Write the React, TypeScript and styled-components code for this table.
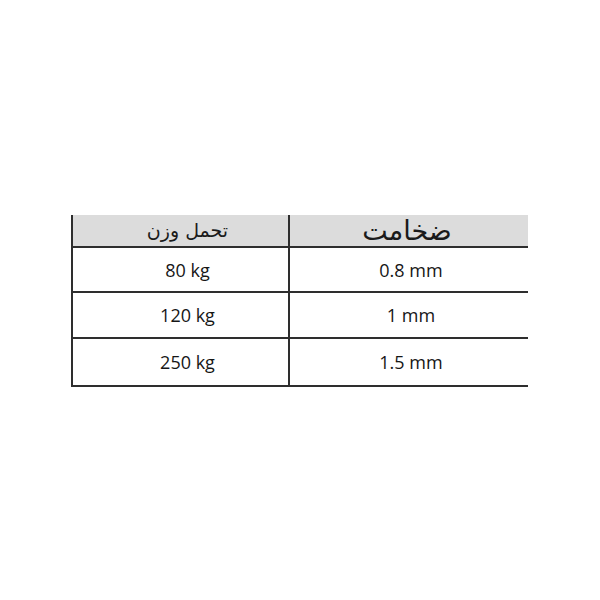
import { Fragment } from 'react';
import styled, { createGlobalStyle } from 'styled-components';

const GlobalStyle = createGlobalStyle`
  html, body {
    margin: 0;
    padding: 0;
    background: #ffffff;
  }
  body {
    font-family: "Open Sans", "DejaVu Sans", sans-serif;
  }
`;

const Page = styled.div`
  width: 600px;
  height: 600px;
  display: flex;
  justify-content: center;
  padding: 215px 0 0 0;
  box-sizing: border-box;
`;

const Table = styled.div`
  width: 455px;
  height: 170px;
  display: grid;
  grid-template-columns: 217px 238px;
  grid-template-rows: 33px 45px 46px 46px;
  border-left: 2px solid #2e2e2e;
  border-bottom: 2px solid #2e2e2e;
  margin-right: 1px;
`;

// $tilt nudges the centred text: positive = right, negative = left
const Cell = styled.div<{ $head?: boolean; $left?: boolean; $last?: boolean; $tilt: number }>`
  display: flex;
  align-items: center;
  justify-content: center;
  padding-left: ${(p) => Math.max(p.$tilt, 0) * 2}px;
  padding-right: ${(p) => Math.max(-p.$tilt, 0) * 2}px;
  background: ${(p) => (p.$head ? '#dcdcdc' : '#ffffff')};
  border-right: ${(p) => (p.$left ? '2px solid #2e2e2e' : 'none')};
  border-bottom: ${(p) => (p.$last ? 'none' : '2px solid #2e2e2e')};
  color: #161616;
  font-size: 18px;
`;

const HeadText = styled.span<{ $size: number }>`
  direction: rtl;
  font-family: "DejaVu Sans", sans-serif;
  font-size: ${(p) => p.$size}px;
  color: #1a1a1a;
  line-height: 1;
`;

const rows = [
  ['80 kg', '0.8 mm'],
  ['120 kg', '1 mm'],
  ['250 kg', '1.5 mm'],
];

export default function App() {
  return (
    <>
      <GlobalStyle />
      <Page>
        <Table>
          <Cell $head $left $tilt={7}>
            <HeadText $size={19}>تحمل وزن</HeadText>
          </Cell>
          <Cell $head $tilt={-2}>
            <HeadText $size={27}>ضخامت</HeadText>
          </Cell>
          {rows.map((r, i) => (
            <Fragment key={i}>
              <Cell $left $last={i === rows.length - 1} $tilt={7}>
                {r[0]}
              </Cell>
              <Cell $last={i === rows.length - 1} $tilt={2}>
                {r[1]}
              </Cell>
            </Fragment>
          ))}
        </Table>
      </Page>
    </>
  );
}
